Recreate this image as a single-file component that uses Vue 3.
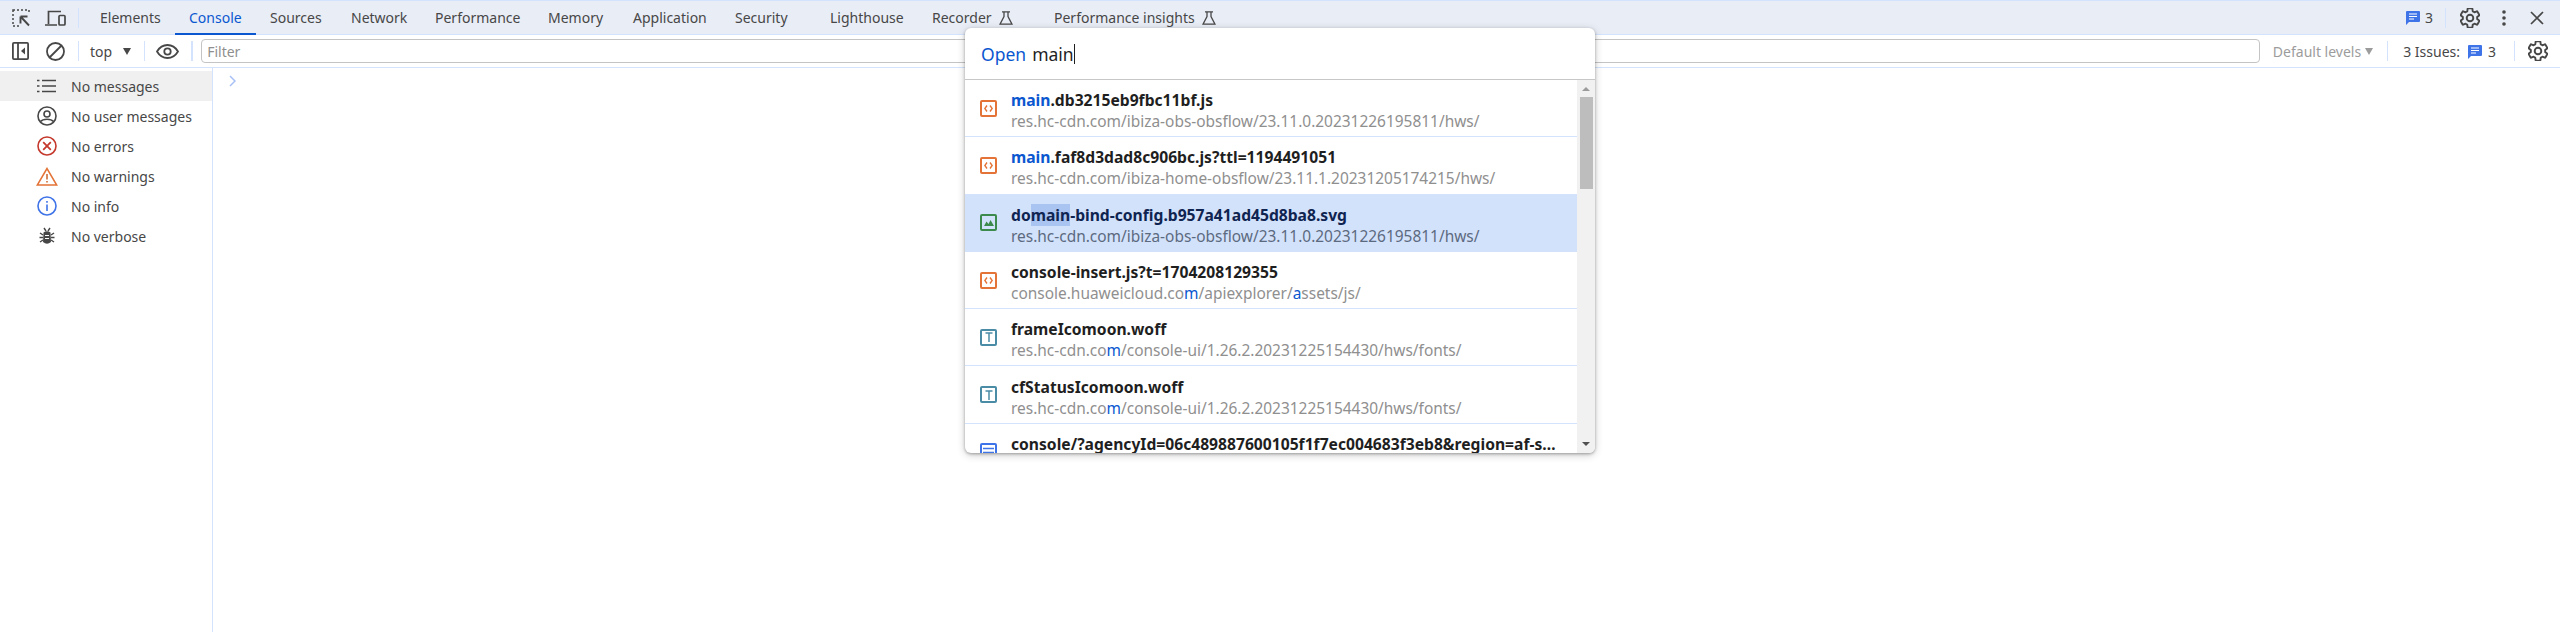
<script setup>
const tabs = [
  { label: 'Elements' },
  { label: 'Console', active: true },
  { label: 'Sources' },
  { label: 'Network' },
  { label: 'Performance' },
  { label: 'Memory' },
  { label: 'Application' },
  { label: 'Security' },
  { label: 'Lighthouse' },
  { label: 'Recorder', flask: true },
  { label: 'Performance insights', flask: true },
]
const filters = [
  { label: 'No messages', icon: 'list', selected: true },
  { label: 'No user messages', icon: 'user' },
  { label: 'No errors', icon: 'error' },
  { label: 'No warnings', icon: 'warn' },
  { label: 'No info', icon: 'info' },
  { label: 'No verbose', icon: 'bug' },
]
const results = [
  { kind: 'code', name: [['main', 'hit'], ['.db3215eb9fbc11bf.js', '']], path: [['res.hc-cdn.com/ibiza-obs-obsflow/23.11.0.20231226195811/hws/', '']] },
  { kind: 'code', name: [['main', 'hit'], ['.faf8d3dad8c906bc.js?ttl=1194491051', '']], path: [['res.hc-cdn.com/ibiza-home-obsflow/23.11.1.20231205174215/hws/', '']] },
  { kind: 'image', selected: true, name: [['do', ''], ['main', 'mark'], ['-bind-config.b957a41ad45d8ba8.svg', '']], path: [['res.hc-cdn.com/ibiza-obs-obsflow/23.11.0.20231226195811/hws/', '']] },
  { kind: 'code', name: [['console-insert.js?t=1704208129355', '']], path: [['console.huaweicloud.co', ''], ['m', 'hit'], ['/apiexplorer/', ''], ['a', 'hit'], ['ssets/js/', '']] },
  { kind: 'font', name: [['frameIcomoon.woff', '']], path: [['res.hc-cdn.co', ''], ['m', 'hit'], ['/console-ui/1.26.2.20231225154430/hws/fonts/', '']] },
  { kind: 'font', name: [['cfStatusIcomoon.woff', '']], path: [['res.hc-cdn.co', ''], ['m', 'hit'], ['/console-ui/1.26.2.20231225154430/hws/fonts/', '']] },
  { kind: 'doc', name: [['console/?agencyId=06c489887600105f1f7ec004683f3eb8&region=af-s…', '']], path: [] },
]
const gearPath = 'M19.14 12.94c.04-.3.06-.61.06-.94 0-.32-.02-.64-.07-.94l2.03-1.58c.18-.14.23-.41.12-.61l-1.92-3.32c-.12-.22-.37-.29-.59-.22l-2.39.96c-.5-.38-1.03-.7-1.62-.94l-.36-2.54c-.04-.24-.24-.41-.48-.41h-3.84c-.24 0-.43.17-.47.41l-.36 2.54c-.59.24-1.13.57-1.62.94l-2.39-.96c-.22-.08-.47 0-.59.22L2.74 8.87c-.12.21-.08.47.12.61l2.03 1.58c-.05.3-.09.63-.09.94s.02.64.07.94l-2.03 1.58c-.18.14-.23.41-.12.61l1.92 3.32c.12.22.37.29.59.22l2.39-.96c.5.38 1.03.7 1.62.94l.36 2.54c.05.24.24.41.48.41h3.84c.24 0 .44-.17.47-.41l.36-2.54c.59-.24 1.13-.56 1.62-.94l2.39.96c.22.08.47 0 .59-.22l1.92-3.32c.12-.22.07-.47-.12-.61l-2.01-1.58z'
</script>

<template>
  <div class="devtools">
    <header class="tabbar">
      <div class="tool-icons">
        <svg class="ic" width="18" height="18" viewBox="0 0 18 18" fill="none" stroke="#474747">
          <path d="M1 3V1H3M5 1H7M9 1H11M13 1H15M17 1V3M1 5V7M1 9V11M1 13V15M1 17H3M5 17H7" stroke-width="1.500" />
          <path d="M8.500 7.500H15.500M8.500 7.500V14.500M8.500 7.500L17 16.500" stroke-width="1.900" />
        </svg>
        <svg class="device" width="21" height="16" viewBox="0 0 21 16" fill="none" stroke="#474747" stroke-width="1.700">
          <path d="M3.500 14V1.500H16M0 15H12" />
          <rect x="14" y="5.500" width="6" height="9.500" rx="1" />
        </svg>
      </div>
      <span class="divider tall"></span>
      <nav class="tabs">
        <div v-for="t in tabs" :key="t.label" class="tab" :class="{ active: t.active }">
          <span>{{ t.label }}</span>
          <svg v-if="t.flask" width="14" height="14" viewBox="0 0 14 14" fill="none" stroke="#474747" stroke-width="1.300">
            <path d="M3 .8H11M5 .8V5.500L1 13.200H13L9 5.500V.8" />
          </svg>
        </div>
      </nav>
      <div class="top-right">
        <svg width="14" height="15" viewBox="0 0 14 15"><path d="M0 2a1 1 0 0 1 1-1h12a1 1 0 0 1 1 1v9a1 1 0 0 1-1 1H3l-3 3z" fill="#3f73e8" /><path d="M3 4h8M3 6.500h8M3 9h5" stroke="#fff" stroke-width="1.200" /></svg>
        <span class="count">3</span>
        <span class="divider short"></span>
        <svg class="gear" width="20" height="20" viewBox="2 2 20 20" fill="none" stroke="#474747" stroke-width="1.900" stroke-linejoin="round">
          <path :d="gearPath" />
          <circle cx="12" cy="12" r="3.300" />
        </svg>
        <svg class="dots" width="4" height="16" viewBox="0 0 4 16" fill="#474747"><circle cx="2" cy="2" r="1.800" /><circle cx="2" cy="8" r="1.800" /><circle cx="2" cy="14" r="1.800" /></svg>
        <svg class="close" width="14" height="14" viewBox="0 0 14 14" stroke="#474747" stroke-width="1.700"><path d="M1 1L13 13M13 1L1 13" /></svg>
      </div>
    </header>

    <div class="toolbar">
      <svg class="side-toggle" width="17" height="18" viewBox="0 0 17 18" fill="none" stroke="#474747" stroke-width="1.800">
        <rect x=".9" y=".9" width="15.200" height="16.200" rx="1" />
        <path d="M6 1V17" />
        <path d="M13 5.500L9 9L13 12.500Z" fill="#474747" stroke="none" />
      </svg>
      <svg class="block" width="19" height="19" viewBox="0 0 19 19" fill="none" stroke="#474747" stroke-width="1.800">
        <circle cx="9.500" cy="9.500" r="8.500" /><path d="M3.500 15.500L15.500 3.500" />
      </svg>
      <span class="divider bar first"></span>
      <span class="context">top</span>
      <span class="caret"></span>
      <span class="divider bar second"></span>
      <svg class="eye" width="23" height="15" viewBox="0 0 23 15" fill="none" stroke="#474747" stroke-width="1.800">
        <path d="M1 7.500C3.500 3.300 7 1 11.500 1S19.500 3.300 22 7.500C19.500 11.700 16 14 11.500 14S3.500 11.700 1 7.500Z" /><circle cx="11.500" cy="7.500" r="3.200" />
      </svg>
      <span class="divider bar third"></span>
      <div class="filter">Filter</div>
      <span class="levels">Default levels</span>
      <span class="caret light"></span>
      <span class="divider bar fourth"></span>
      <span class="issues">3 Issues:</span>
      <svg class="issue-ic" width="14" height="15" viewBox="0 0 14 15"><path d="M0 2a1 1 0 0 1 1-1h12a1 1 0 0 1 1 1v9a1 1 0 0 1-1 1H3l-3 3z" fill="#3f73e8" /><path d="M3 4h8M3 6.500h8M3 9h5" stroke="#fff" stroke-width="1.200" /></svg>
      <span class="count tb">3</span>
      <span class="divider bar fifth"></span>
      <svg class="gear tb" width="20" height="20" viewBox="2 2 20 20" fill="none" stroke="#474747" stroke-width="1.900" stroke-linejoin="round">
        <path :d="gearPath" />
        <circle cx="12" cy="12" r="3.300" />
      </svg>
    </div>

    <main class="body">
      <aside class="sidebar">
        <div v-for="f in filters" :key="f.label" class="filter-row" :class="{ selected: f.selected }">
          <span class="f-icon">
            <svg v-if="f.icon === 'list'" width="19" height="14" viewBox="0 0 19 14" fill="none" stroke="#474747" stroke-width="1.700">
              <path d="M5 1.500H19M5 7H19M5 12.500H19" /><path d="M0 1.500H2.500M0 7H2.500M0 12.500H2.500" />
            </svg>
            <svg v-else-if="f.icon === 'user'" width="20" height="20" viewBox="0 0 20 20" fill="none" stroke="#474747" stroke-width="1.600">
              <circle cx="10" cy="10" r="9" /><circle cx="10" cy="8" r="3" /><path d="M3.500 15.500C6 12.500 14 12.500 16.500 15.500" />
            </svg>
            <svg v-else-if="f.icon === 'error'" width="20" height="20" viewBox="0 0 20 20" fill="none" stroke="#c5382c" stroke-width="1.600">
              <circle cx="10" cy="10" r="9" /><path d="M6.200 6.200L13.800 13.800M13.800 6.200L6.200 13.800" stroke-width="1.800" />
            </svg>
            <svg v-else-if="f.icon === 'warn'" width="22" height="19" viewBox="0 0 22 19" fill="none" stroke="#e37336" stroke-width="1.500">
              <path d="M11 1.500L1.300 18H20.700Z" /><path d="M11 7V12.500" stroke="#c9622a" /><path d="M11 14V15.600" stroke="#c9622a" />
            </svg>
            <svg v-else-if="f.icon === 'info'" width="20" height="20" viewBox="0 0 20 20" fill="none" stroke="#3f73e8" stroke-width="1.600">
              <circle cx="10" cy="10" r="9" /><path d="M10 8.500V15" /><path d="M10 5V6.800" />
            </svg>
            <svg v-else width="16" height="18" viewBox="0 0 16 18" fill="#474747">
              <path d="M4.500 5.500Q8 3 11.500 5.500L12 15Q8 18.500 4 15Z" />
              <path d="M5 1L7 4M11 1L9 4M1 6L4 8M15 6L12 8M.5 10.500H4M15.500 10.500H12M1 15L4 13M15 15L12 13" stroke="#474747" stroke-width="1.400" />
              <path d="M6 8.500H10M6 11.500H10" stroke="#fff" stroke-width="1.200" />
            </svg>
          </span>
          <span>{{ f.label }}</span>
        </div>
      </aside>
      <section class="console">
        <svg width="7" height="12" viewBox="0 0 7 12" fill="none" stroke="#a8c0f5" stroke-width="1.500"><path d="M1 1L6 6L1 11" /></svg>
      </section>
    </main>

    <div class="palette">
      <div class="prompt">
        <span class="open">Open</span>
        <span class="query">main</span>
        <span class="cursor"></span>
      </div>
      <div class="list-wrap">
        <ul class="results">
          <li v-for="(r, i) in results" :key="i" class="result" :class="{ selected: r.selected }">
            <span class="file-ic" :class="r.kind">
              <svg v-if="r.kind === 'code'" width="9" height="7" viewBox="0 0 9 7" fill="none" stroke="#e37336" stroke-width="1.400"><path d="M3 .5L.8 3.500L3 6.500M6 .5L8.200 3.500L6 6.500" /></svg>
              <svg v-else-if="r.kind === 'image'" width="10" height="6" viewBox="0 0 10 6" fill="#3d8b4c"><path d="M0 6L2.500 1.500L4.500 4L6.500 0L10 6Z" /></svg>
              <svg v-else-if="r.kind === 'font'" width="8" height="10" viewBox="0 0 8 10" fill="none" stroke="#4a8ba6" stroke-width="1.500"><path d="M.5 1H7.500M4 1V10" /></svg>
              <svg v-else width="11" height="9" viewBox="0 0 11 9" fill="none" stroke="#3f73e8" stroke-width="1.400"><path d="M0 1.500H11M0 5.500H11" /></svg>
            </span>
            <div class="texts">
              <div class="r-name"><span v-for="(p, j) in r.name" :key="j" :class="p[1]">{{ p[0] }}</span></div>
              <div class="r-path"><span v-for="(p, j) in r.path" :key="j" :class="p[1]">{{ p[0] }}</span></div>
            </div>
          </li>
        </ul>
        <div class="scroll">
          <span class="arrow up"></span>
          <span class="thumb"></span>
          <span class="arrow down"></span>
        </div>
      </div>
    </div>
  </div>
</template>

<style scoped>
.devtools {
  position: relative;
  width: 2560px;
  height: 632px;
  display: flex;
  flex-direction: column;
  overflow: hidden;
  background: #fff;
  color: #474747;
  font-family: "Noto Sans", "Open Sans", sans-serif;
  font-size: 14px;
}
svg { flex: none; display: block; }
.tabbar {
  height: 35px;
  flex: none;
  box-sizing: border-box;
  display: flex;
  align-items: center;
  background: #e9edf6;
  border-top: 1px solid #d3e3fd;
  border-bottom: 1px solid #d3e3fd;
}
.tool-icons { display: flex; align-items: center; padding-left: 12px; }
.device { margin-left: 15px; }
.divider { display: block; background: #d3e3fd; width: 1px; flex: none; }
.divider.tall { height: 20px; margin-left: 12px; }
.tabs {
  display: grid;
  grid-template-columns: 89px 81px 81px 84px 113px 85px 102px 95px 102px 122px 200px;
  height: 100%;
  margin-left: 7px;
  align-items: center;
}
.tab {
  height: 100%;
  display: flex;
  align-items: center;
  gap: 7px;
  padding-left: 14px;
  box-sizing: border-box;
  white-space: nowrap;
  position: relative;
}
.tab.active { color: #0b57d0; }
.tab.active::after {
  content: "";
  position: absolute;
  left: 0; right: 0; bottom: -1px;
  height: 2px;
  background: #0b57d0;
}
.top-right { margin-left: auto; display: flex; align-items: center; padding-right: 16px; }
.count { margin-left: 5px; }
.divider.short { height: 20px; margin-left: 12px; }
.gear { margin-left: 14px; }
.dots { margin-left: 22px; }
.close { margin-left: 24px; }

.toolbar {
  height: 33px;
  flex: none;
  box-sizing: border-box;
  display: flex;
  align-items: center;
  border-bottom: 1px solid #d3e3fd;
}
.side-toggle { margin-left: 12px; }
.block { margin-left: 17px; }
.divider.bar { height: 20px; }
.first { margin-left: 13px; }
.context { margin-left: 11px; }
.caret {
  width: 0; height: 0;
  margin-left: 11px;
  border-left: 4.500px solid transparent;
  border-right: 4.500px solid transparent;
  border-top: 7px solid #474747;
}
.caret.light { border-top-color: #9c9c9c; margin-left: 4px; }
.second { margin-left: 13px; }
.eye { margin-left: 11px; }
.third { margin-left: 12px; width: 2px !important; }
.filter {
  flex: 1;
  height: 24px;
  box-sizing: border-box;
  margin-left: 8px;
  padding-left: 5px;
  border: 1px solid #c4c4c4;
  border-radius: 4px;
  display: flex;
  align-items: center;
  color: #8f8f8f;
}
.levels { margin-left: 13px; color: #9c9c9c; }
.fourth { margin-left: 14px; }
.issues { margin-left: 15px; }
.issue-ic { margin-left: 8px; }
.count.tb { margin-left: 6px; }
.fifth { margin-left: 18px; }
.gear.tb { margin-left: 13px; margin-right: 12px; }

.body { flex: 1; display: flex; min-height: 0; }
.sidebar {
  width: 213px;
  flex: none;
  box-sizing: border-box;
  border-right: 1px solid #d3e3fd;
  padding-top: 3px;
}
.filter-row { height: 30px; display: flex; align-items: center; white-space: nowrap; }
.filter-row.selected { background: #f0f0f0; }
.f-icon { width: 71px; padding-left: 22px; box-sizing: border-box; flex: none; display: flex; justify-content: center; }
.console { flex: 1; padding: 7px 0 0 16px; }

.palette {
  position: absolute;
  left: 965px;
  top: 28px;
  width: 630px;
  height: 425px;
  display: flex;
  flex-direction: column;
  background: #fff;
  border-radius: 6px;
  overflow: hidden;
  box-shadow: 0 1px 3px rgba(0,0,0,.3), 0 2px 8px rgba(0,0,0,.2);
}
.prompt {
  height: 52px;
  flex: none;
  box-sizing: border-box;
  display: flex;
  align-items: center;
  padding-left: 16px;
  border-bottom: 1px solid #c7c7c7;
  color: #1f1f1f;
}
.open { color: #0b57d0; margin-right: 6px; font-size: 17.500px; }
.query { font-size: 17.500px; }
.cursor { width: 1px; height: 20px; background: #1f1f1f; }
.list-wrap { flex: 1; display: flex; min-height: 0; }
.results { flex: 1; list-style: none; margin: 0; padding: 0; overflow: hidden; min-width: 0; }
.result {
  height: 57.300px;
  box-sizing: border-box;
  display: flex;
  align-items: center;
  border-bottom: 1px solid #d3e3fd;
}
.result.selected { background: #d3e2fb; border-bottom-color: #d3e2fb; }
.file-ic {
  width: 17px;
  height: 17px;
  box-sizing: border-box;
  margin-left: 15px;
  border: 2px solid;
  border-radius: 2px;
  display: flex;
  align-items: center;
  justify-content: center;
  flex: none;
}
.file-ic.code { border-color: #e37336; }
.file-ic.image { border-color: #3d8b4c; }
.file-ic.font { border-color: #4a8ba6; }
.file-ic.doc { border-color: #3f73e8; }
.texts { margin-left: 14px; min-width: 0; white-space: nowrap; padding-top: 5px; }
.r-name { font-weight: 700; font-size: 15.650px; color: #1f1f1f; line-height: 21px; }
.r-path { font-size: 15.450px; color: #8f8f8f; line-height: 20px; min-height: 20px; }
.selected .r-name { color: #0f2450; }
.selected .r-path { color: #5c6a80; }
.hit { color: #0b57d0; }
.mark { background: #a9c4f0; }
.scroll {
  width: 18px;
  flex: none;
  background: #f1f1f1;
  display: flex;
  flex-direction: column;
  align-items: center;
}
.arrow { width: 0; height: 0; border-left: 4px solid transparent; border-right: 4px solid transparent; }
.arrow.up { border-bottom: 4px solid #9b9b9b; margin-top: 7px; }
.thumb { width: 13px; height: 92px; background: #bdbdbd; margin-top: 6px; }
.arrow.down { border-top: 4px solid #505050; margin-top: auto; margin-bottom: 7px; }
</style>
